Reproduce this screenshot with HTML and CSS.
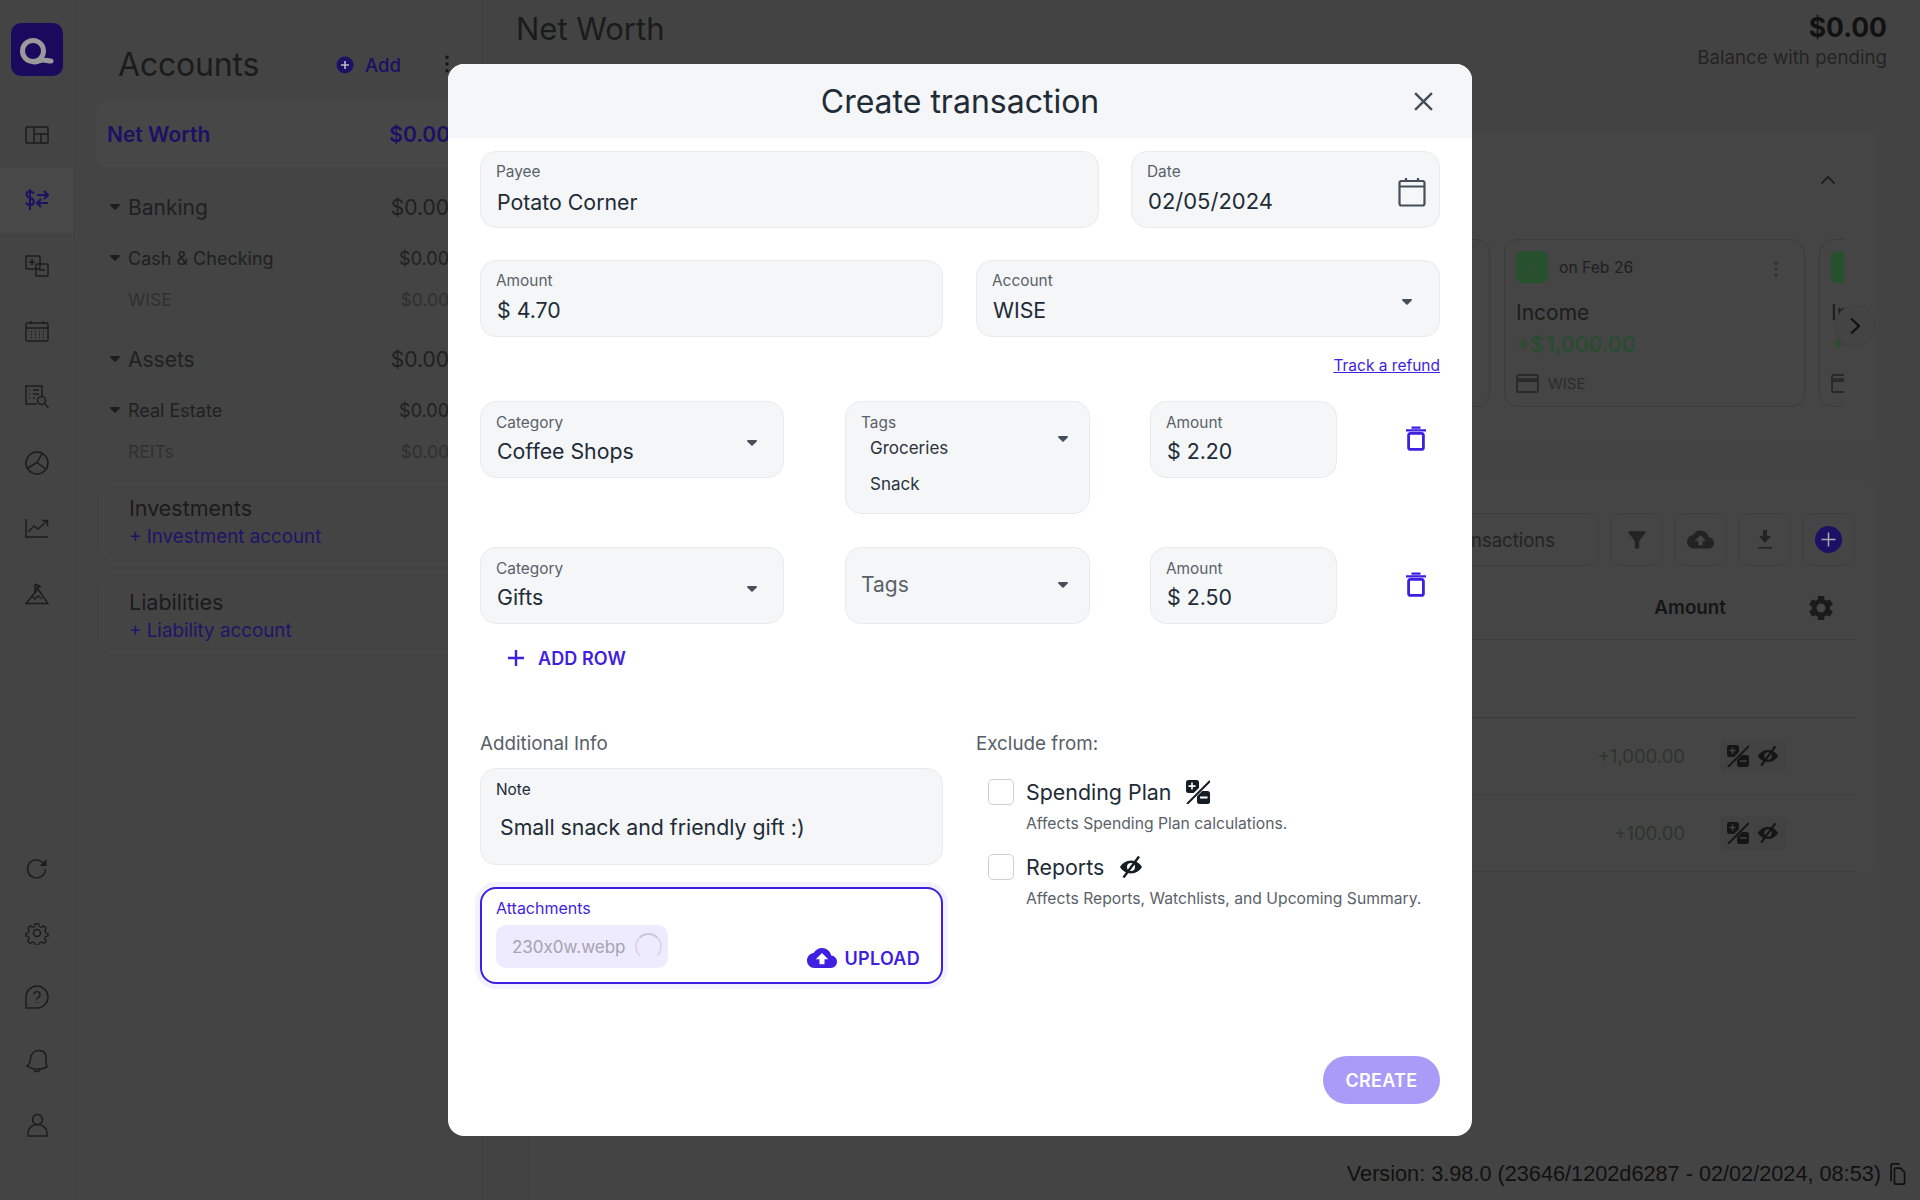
FILE: index.html
```html
<!DOCTYPE html>
<html lang="en">
<head>
<meta charset="utf-8">
<title>Create transaction</title>
<link rel="stylesheet" href="styles.css">
</head>
<body>
<svg class="defs" width="0" height="0" aria-hidden="true">
  <defs>
    <symbol id="i-caret" viewBox="0 0 10 6"><path d="M1 0h8c.8 0 1.2.9.7 1.5L5.6 5.6a.8.8 0 0 1-1.2 0L.3 1.5C-.2.9.2 0 1 0z"/></symbol>
    <symbol id="i-trash" viewBox="0 0 20 25"><path d="M0 3.200h20v2.300H0zM5.500.6h9v2.200h-9z"/><rect x="2.600" y="7.400" width="14.800" height="16" rx="2" fill="none" stroke="currentColor" stroke-width="2.800"/></symbol>
    <symbol id="i-pct" viewBox="0 0 24 24"><rect x="0" y="0" width="13" height="13" rx="2.500"/><rect x="11" y="11" width="13" height="13" rx="2.500"/><path d="M0 24 24 0" stroke="#fff" stroke-width="4.500" fill="none"/><path d="M1 24 24 1" stroke="currentColor" stroke-width="2" fill="none"/><path d="M2.500 5.300h2.700V2.600h1.600v2.700h2.700v1.600H6.800v2.700H5.200V6.900H2.500zM14 16.600h7.500v1.800H14z" fill="#fff"/></symbol>
    <symbol id="i-pct-dim" viewBox="0 0 24 24"><rect x="0" y="0" width="13" height="13" rx="2.500"/><rect x="11" y="11" width="13" height="13" rx="2.500"/><path d="M0 24 24 0" stroke="#424242" stroke-width="4.500" fill="none"/><path d="M1 24 24 1" stroke="currentColor" stroke-width="2" fill="none"/><path d="M2.500 5.300h2.700V2.600h1.600v2.700h2.700v1.600H6.800v2.700H5.200V6.900H2.500zM14 16.600h7.500v1.800H14z" fill="#424242"/></symbol>
    <symbol id="i-eye" viewBox="0 0 24 24"><path d="M12 5.500C7 5.500 3 8.500 1 12c2 3.500 6 6.500 11 6.500s9-3 11-6.500c-2-3.500-6-6.500-11-6.500zm0 10.500a4 4 0 1 1 0-8 4 4 0 0 1 0 8z"/><path d="M4.500 22.500 20 1.500" stroke="currentColor" stroke-width="2.400" fill="none"/></symbol>
    <symbol id="i-cloud" viewBox="0 0 24 24"><path d="M19.350 10.040C18.670 6.590 15.640 4 12 4 9.110 4 6.600 5.640 5.350 8.040 2.340 8.360 0 10.910 0 14c0 3.310 2.690 6 6 6h13c2.760 0 5-2.240 5-5 0-2.640-2.050-4.780-4.650-4.960zM14 13v4h-4v-4H7l5-5 5 5h-3z"/></symbol>
    <symbol id="i-card" viewBox="0 0 24 20"><path d="M2.500 1h19A1.500 1.500 0 0 1 23 2.500v15a1.500 1.500 0 0 1-1.500 1.500h-19A1.500 1.500 0 0 1 1 17.500v-15A1.500 1.500 0 0 1 2.500 1z" fill="none" stroke="currentColor" stroke-width="2"/><path d="M1 4.500h22v4H1z"/></symbol>
    <symbol id="i-kebab" viewBox="0 0 4 16"><circle cx="2" cy="2" r="1.500"/><circle cx="2" cy="8" r="1.500"/><circle cx="2" cy="14" r="1.500"/></symbol>
  </defs>
</svg>

<div class="app">
  <nav class="rail">
    <div class="logo">
      <svg width="52" height="53" viewBox="0 0 52 53" fill="none" stroke="#9a9a9a" stroke-width="5"><circle cx="22" cy="28" r="10.500"/><path d="M23 39c4 0 6-2 9-2s5 1 8 1" stroke-linecap="round"/></svg>
    </div>
    <ul class="rail-list">
      <li class="rail-item"><svg class="rail-icon" viewBox="0 0 24 24"><rect x="1" y="4" width="22" height="16" rx="1"/><path d="M9 4v16M9 11h14M16 11v9"/></svg></li>
      <li class="rail-item is-active"><svg class="rail-icon" viewBox="0 0 24 24"><path d="M9 5.500C8 4 6.500 3.500 5 3.500c-2 0-3.500 1.200-3.500 3s1.500 2.700 3.500 3.300 3.800 1.500 3.800 3.700-1.700 3.500-3.800 3.500c-1.700 0-3.300-.8-4-2.300M5 1v21M12 7h11M19 3l4 4-4 4M23 15H12M16 11l-4 4 4 4"/></svg></li>
      <li class="rail-item"><svg class="rail-icon" viewBox="0 0 24 24"><rect x="1" y="2" width="14" height="13" rx="1"/><rect x="11" y="10" width="12" height="12" rx="1"/><path d="M4 8h6M7 5v6M14 16h6"/></svg></li>
      <li class="rail-item"><svg class="rail-icon" viewBox="0 0 24 24"><rect x="1" y="3" width="22" height="18" rx="1"/><path d="M1 8h22M6 1v3M18 1v3M6 11.500h1M10 11.500h1M14 11.500h1M18 11.500h1M6 14.500h1M10 14.500h1M14 14.500h1M18 14.500h1M6 17.500h1M10 17.500h1M14 17.500h1M18 17.500h1"/></svg></li>
      <li class="rail-item"><svg class="rail-icon" viewBox="0 0 24 24"><path d="M12 19H1V1h16v10"/><path d="M4 5h1M8 5h6M4 9h1M8 9h6M4 13h1M8 13h2"/><circle cx="16.500" cy="15.500" r="4"/><path d="M19.500 18.500 23.500 23"/></svg></li>
      <li class="rail-item"><svg class="rail-icon" viewBox="0 0 24 24"><circle cx="12" cy="12" r="11"/><path d="M3 17 12 11.500l5-9M12 11.500l8 6"/></svg></li>
      <li class="rail-item"><svg class="rail-icon" viewBox="0 0 24 24"><path d="M1 3v18h22M3 16l6-6 4 3 9-8M17 4.500h5.500V10"/></svg></li>
      <li class="rail-item"><svg class="rail-icon" viewBox="0 0 24 24"><path d="M1 21.500h22L13 7 1 21.500zM10 2v8M10 2l5 2.500-5 2M7 14l3 3 3-3 4 3"/></svg></li>
    </ul>
    <ul class="rail-list rail-bottom">
      <li class="rail-item-lg"><svg class="rail-icon" viewBox="0 0 24 24"><path d="M20.500 12a9 9 0 1 1-2.700-6.500L21 8"/><path class="rail-fill" d="M21.500 2v7h-7z"/></svg></li>
      <li class="rail-item-lg"><svg class="rail-icon" viewBox="0 0 24 24"><circle cx="12" cy="12" r="3.500"/><path d="M10 1.500h4l.6 3 2.500 1.100 2.600-1.700 2.800 2.800-1.700 2.600 1.100 2.500 2.600.6v3l-2.600.6-1.100 2.500 1.700 2.600-2.800 2.800-2.600-1.700-2.500 1.100-.6 2.600h-4l-.6-2.600-2.500-1.100-2.600 1.700-2.800-2.800 1.700-2.600-1.100-2.500-2.600-.6v-3l2.600-.6 1.100-2.500L1.500 6.700l2.800-2.800 2.600 1.700 2.500-1.100z" transform="translate(1.400 1.400) scale(.88)"/></svg></li>
      <li class="rail-item-lg"><svg class="rail-icon" viewBox="0 0 24 24"><path d="M1 23V12a11 11 0 1 1 11 11H1z"/><path d="M9 9.500a3 3 0 1 1 4.500 2.600c-1 .6-1.500 1.200-1.500 2.400M12 17v1"/></svg></li>
      <li class="rail-item-lg"><svg class="rail-icon" viewBox="0 0 24 24"><path d="M2 17c3-1.500 3-4 3.500-7.500C6.200 4 10 1 15 1.500s6.500 4 6 8.500c-.3 3.500 0 6 1 8-6 3-14 3-20-1zM9 20.500c.5 2.500 4 3 6 .5"/></svg></li>
      <li class="rail-item-lg"><svg class="rail-icon" viewBox="0 0 24 24"><circle cx="12.500" cy="6.500" r="5"/><path d="M3 23v-3c0-5 4-8.500 9.500-8.500S22 15 22 20v3z"/></svg></li>
    </ul>
  </nav>

  <aside class="accounts">
    <header class="accounts-head">
      <h2 class="accounts-title">Accounts</h2>
      <span class="add-btn"><svg class="add-icon" viewBox="0 0 18 18"><circle cx="9" cy="9" r="8.500"/><path d="M5 9h8M9 5v8" stroke="#bbb" stroke-width="1.600"/></svg>Add</span>
      <svg class="head-kebab"><use href="#i-kebab"/></svg>
    </header>
    <div class="nw-row"><span>Net Worth</span><span>$0.00</span></div>
    <div class="acc-row acc-l1 first"><svg class="caret"><use href="#i-caret"/></svg><span class="acc-name">Banking</span><span>$0.00</span></div>
    <div class="acc-row acc-l2"><svg class="caret"><use href="#i-caret"/></svg><span class="acc-name">Cash &amp; Checking</span><span>$0.00</span></div>
    <div class="acc-row acc-l3"><span class="acc-name">WISE</span><span>$0.00</span></div>
    <div class="acc-row acc-l1"><svg class="caret"><use href="#i-caret"/></svg><span class="acc-name">Assets</span><span>$0.00</span></div>
    <div class="acc-row acc-l2"><svg class="caret"><use href="#i-caret"/></svg><span class="acc-name">Real Estate</span><span>$0.00</span></div>
    <div class="acc-row acc-l3"><span class="acc-name">REITs</span><span>$0.00</span></div>
    <div class="acc-card"><div class="acc-card-title">Investments</div><div class="acc-card-link">+ Investment account</div></div>
    <div class="acc-card"><div class="acc-card-title">Liabilities</div><div class="acc-card-link">+ Liability account</div></div>
  </aside>

  <main class="main">
    <header class="main-head">
      <h1 class="main-title">Net Worth</h1>
      <div class="balance"><div class="balance-value">$0.00</div><div class="balance-label">Balance with pending</div></div>
    </header>
    <div class="main-body">
      <section class="panel upcoming">
        <div class="chevron-row"><svg class="chevron" viewBox="0 0 18 10"><path d="M1.500 9 9 1.500 16.500 9"/></svg></div>
        <div class="carousel">
          <article class="up-card"></article>
          <article class="up-card">
            <div class="up-top"><span class="up-badge">I</span><span class="up-date">on Feb 26</span><svg class="up-kebab"><use href="#i-kebab"/></svg></div>
            <div class="up-name">Income</div>
            <div class="up-amount">+$ 1,000.00</div>
            <div class="up-acc"><svg class="up-card-icon"><use href="#i-card"/></svg>WISE</div>
          </article>
          <article class="up-card">
            <div class="up-top"><span class="up-badge"></span></div>
            <div class="up-name">Income</div>
            <div class="up-amount">+$ 100.00</div>
            <div class="up-acc"><svg class="up-card-icon"><use href="#i-card"/></svg></div>
          </article>
        </div>
        <span class="next-btn"><svg viewBox="0 0 12 18" width="12" height="18"><path d="M2 1.500 10 9l-8 7.500"/></svg></span>
      </section>

      <section class="panel txns">
        <div class="toolbar">
          <div class="search">Search transactions</div>
          <span class="tool"><svg viewBox="0 0 24 24" width="26" height="26"><path d="M4.250 5.610C6.270 8.200 10 13 10 13v6c0 .55.45 1 1 1h2c.55 0 1-.45 1-1v-6s3.720-4.800 5.740-7.390A.998.998 0 0 0 18.950 4H5.040c-.83 0-1.300.95-.79 1.610z"/></svg></span>
          <span class="tool"><svg width="27" height="27"><use href="#i-cloud"/></svg></span>
          <span class="tool"><svg viewBox="0 0 24 24" width="24" height="24"><path d="M18 8h-4V2h-4v6H6l6 7 6-7zM5 19v1.500h14V19H5z"/></svg></span>
          <span class="tool"><svg viewBox="0 0 27 27" width="27" height="27"><circle class="tool-plus" cx="13.500" cy="13.500" r="13.500"/><path d="M6.500 13.500h14M13.500 6.500v14" stroke="#aaa" stroke-width="1.500"/></svg></span>
        </div>
        <div class="t-head">
          <span class="t-head-amount">Amount</span>
          <svg class="t-gear" viewBox="0 0 24 24"><path d="M19.140 12.940c.04-.3.06-.61.06-.94 0-.32-.02-.64-.07-.94l2.030-1.580c.18-.14.23-.41.12-.61l-1.920-3.320c-.12-.22-.37-.29-.59-.22l-2.390.96c-.5-.38-1.030-.7-1.620-.94l-.36-2.540c-.04-.24-.24-.41-.48-.41h-3.840c-.24 0-.43.17-.47.41l-.36 2.540c-.59.24-1.130.57-1.620.94l-2.390-.96c-.22-.08-.47 0-.59.22L2.740 8.870c-.12.21-.08.47.12.61l2.030 1.580c-.05.3-.09.63-.09.94s.02.64.07.94l-2.030 1.580c-.18.14-.23.41-.12.61l1.920 3.320c.12.22.37.29.59.22l2.390-.96c.5.38 1.030.7 1.620.94l.36 2.540c.05.24.24.41.48.41h3.840c.24 0 .44-.17.47-.41l.36-2.540c.59-.24 1.130-.56 1.620-.94l2.390.96c.22.08.47 0 .59-.22l1.920-3.320c.12-.22.07-.47-.12-.61l-2.010-1.580zM12 15.600c-1.980 0-3.600-1.620-3.600-3.600s1.620-3.600 3.600-3.600 3.600 1.620 3.600 3.600-1.620 3.600-3.600 3.600z"/></svg>
        </div>
        <div class="t-group"></div>
        <div class="t-row"><span class="t-amount">+1,000.00</span><span class="t-flags"><svg><use href="#i-pct-dim"/></svg><svg><use href="#i-eye"/></svg></span></div>
        <div class="t-row"><span class="t-amount">+100.00</span><span class="t-flags"><svg><use href="#i-pct-dim"/></svg><svg><use href="#i-eye"/></svg></span></div>
      </section>
    </div>
  </main>
</div>

<div class="version">Version: 3.98.0 (23646/1202d6287 - 02/02/2024, 08:53)<svg class="copy" viewBox="0 0 20 26"><path d="M3 22V3a2 2 0 0 1 2-2h8" fill="none" stroke="currentColor" stroke-width="2"/><path d="M7 7a1 1 0 0 1 1-1h6l5 5v12a2 2 0 0 1-2 2H9a2 2 0 0 1-2-2z" fill="none" stroke="currentColor" stroke-width="2"/></svg></div>

<section class="modal" role="dialog" aria-label="Create transaction">
  <header class="modal-head">
    <h2 class="modal-title">Create transaction</h2>
    <svg class="modal-close" viewBox="0 0 20 20"><path d="M2 2l16 16M18 2 2 18"/></svg>
  </header>
  <div class="modal-body">
    <div class="row row-top">
      <div class="field"><div class="f-label">Payee</div><div class="f-value">Potato Corner</div></div>
      <div class="field field-date">
        <div class="f-label">Date</div><div class="f-value date-value">02/05/2024</div>
        <svg class="f-cal" viewBox="0 0 28 30"><rect x="1.500" y="4" width="25" height="24.500" rx="2"/><path d="M1.500 9.500h25M8 1v3M20 1v3"/></svg>
      </div>
    </div>
    <div class="row-pair row-second">
      <div class="field"><div class="f-label">Amount</div><div class="f-value">$ 4.70</div></div>
      <div class="field has-caret"><div class="f-label">Account</div><div class="f-value">WISE</div><svg class="f-caret caret-account"><use href="#i-caret"/></svg></div>
    </div>
    <div class="refund"><a class="refund-link">Track a refund</a></div>

    <div class="split">
      <div class="field has-caret"><div class="f-label">Category</div><div class="f-value">Coffee Shops</div><svg class="f-caret"><use href="#i-caret"/></svg></div>
      <div class="field field-tags has-caret"><div class="f-label">Tags</div><div class="tag">Groceries</div><div class="tag">Snack</div><svg class="f-caret caret-tags"><use href="#i-caret"/></svg></div>
      <div class="field"><div class="f-label">Amount</div><div class="f-value">$ 2.20</div></div>
      <svg class="trash"><use href="#i-trash"/></svg>
    </div>
    <div class="split split-second">
      <div class="field has-caret"><div class="f-label">Category</div><div class="f-value">Gifts</div><svg class="f-caret"><use href="#i-caret"/></svg></div>
      <div class="field field-empty has-caret"><div class="f-placeholder">Tags</div><svg class="f-caret caret-tags"><use href="#i-caret"/></svg></div>
      <div class="field"><div class="f-label">Amount</div><div class="f-value">$ 2.50</div></div>
      <svg class="trash"><use href="#i-trash"/></svg>
    </div>
    <div class="add-row"><svg class="add-row-icon" viewBox="0 0 18 18"><path d="M9 1v16M1 9h16"/></svg>ADD ROW</div>

    <div class="row-pair details">
      <div class="col">
        <div class="section-label">Additional Info</div>
        <div class="field field-note"><div class="f-label note-label">Note</div><div class="f-value note-value">Small snack and friendly gift :)</div></div>
        <div class="field field-attach">
          <div class="f-label attach-label">Attachments</div>
          <div class="attach-line">
            <span class="chip">230x0w.webp<span class="spinner"></span></span>
            <span class="upload"><svg class="upload-icon"><use href="#i-cloud"/></svg>UPLOAD</span>
          </div>
        </div>
      </div>
      <div class="col">
        <div class="section-label">Exclude from:</div>
        <div class="check first-check">
          <span class="box"></span>
          <div><div class="check-title">Spending Plan<svg class="check-icon"><use href="#i-pct"/></svg></div><div class="check-sub">Affects Spending Plan calculations.</div></div>
        </div>
        <div class="check">
          <span class="box"></span>
          <div><div class="check-title">Reports<svg class="check-icon"><use href="#i-eye"/></svg></div><div class="check-sub">Affects Reports, Watchlists, and Upcoming Summary.</div></div>
        </div>
      </div>
    </div>
    <div class="actions"><span class="create">CREATE</span></div>
  </div>
</section>
</body>
</html>
```
FILE: styles.css
```css
* { box-sizing: border-box; }
html, body { margin: 0; height: 100%; }
body {
  width: 1920px; height: 1200px; overflow: hidden; position: relative;
  background: #434343; color: #161616;
  font-family: Inter, "Noto Sans", sans-serif;
}
h1, h2, ul { margin: 0; padding: 0; font-weight: 400; list-style: none; }
.defs { position: absolute; }

.app { display: flex; height: 1200px; }

/* rail */
.rail { width: 75px; flex: none; border-right: 1px solid #3f3f3f; display: flex; flex-direction: column; background: #444; }
.logo { width: 52px; height: 53px; margin: 23px 0 26px 11px; background: #1a0a5e; border-radius: 10px; }
.logo svg { display: block; }
.rail-list { display: flex; flex-direction: column; }
.rail-item { height: 65.6px; display: flex; align-items: center; justify-content: center; }
.rail-item.is-active { background: #484848; color: #1c1065; }
.rail-item-lg { height: 64px; display: flex; align-items: center; justify-content: center; }
.rail-bottom { margin-top: auto; margin-bottom: 43px; }
.rail-icon { width: 24px; height: 24px; fill: none; stroke: #1c1c1c; stroke-width: 1.500; }
.is-active .rail-icon { stroke: #1c1065; stroke-width: 2; }
.rail-fill { fill: #1c1c1c; stroke: none; }

/* accounts */
.accounts { width: 408px; flex: none; border-right: 1px solid #3f3f3f; padding: 0 33px 0 22px; background: #444; overflow: hidden; }
.accounts-head { height: 101px; display: flex; align-items: center; padding: 27px 0 0 21px; margin-right: -22px; }
.accounts-title { font-size: 32px; letter-spacing: -.2px; color: #1b1b1b; width: 218px; }
.add-btn { display: flex; align-items: center; margin-top: 2px; font-size: 18.500px; font-weight: 500; color: #1c1065; }
.add-icon { width: 18px; height: 18px; fill: #1c1065; margin-right: 11px; }
.head-kebab { width: 6px; height: 18px; fill: #151515; margin-left: 43px; }
.nw-row { height: 66px; margin-right: -33px; padding: 0 32px 0 10px; display: flex; align-items: center; justify-content: space-between; background: #474747; border-radius: 8px; color: #1c1065; font-size: 21px; font-weight: 600; }
.acc-row { display: flex; align-items: center; justify-content: space-between; color: #202020; padding-left: 13px; }
.acc-name { flex: 1; }
.acc-l1 { font-size: 21px; height: 46px; margin-top: 21px; }
.acc-l1.first { margin-top: 17px; }
.acc-l2 { font-size: 18px; height: 34px; margin-top: 11px; }
.acc-l3 { font-size: 17.500px; height: 32px; margin-top: 8px; color: #303030; padding-left: 31px; }
.caret { width: 10px; height: 6px; fill: #1c1c1c; margin-right: 8px; }
.acc-card { height: 81px; margin-top: 13px; margin-right: -33px; border: 1px solid #404040; border-radius: 16px; padding: 14px 0 0 31px; }
.acc-l3 + .acc-card { margin-top: 14px; }
.acc-card-title { font-size: 21.500px; line-height: 24px; color: #1b1b1b; }
.acc-card-link { font-size: 18.800px; line-height: 22px; margin-top: 6px; color: #1e1468; }

/* main */
.main { flex: 1; min-width: 0; }
.main-head { height: 84px; display: flex; justify-content: space-between; padding: 11px 33px 0 33px; align-items: flex-start; }
.main-title { font-size: 31px; line-height: 36px; color: #1b1b1b; }
.balance { text-align: right; }
.balance-value { font-size: 26.500px; line-height: 33px; font-weight: 700; color: #111; }
.balance-label { font-size: 18.700px; line-height: 27px; color: #232323; }
.main-body { margin: 48px 0 0 45px; width: 1347px; height: 1068px; background: #444; border-left: 1px solid #3f3f3f; }
.panel { background: #454545; border-radius: 12px; }
.upcoming { height: 313px; position: relative; padding-top: 32px; }
.chevron-row { display: flex; justify-content: flex-end; padding-right: 39px; height: 75px; }
.chevron { width: 16px; height: 10px; fill: none; stroke: #1b1b1b; stroke-width: 2; margin-top: 11px; }
.carousel { display: flex; gap: 14px; margin-left: 660px; width: 655px; overflow: hidden; }
.up-card { width: 301px; height: 168px; flex: none; border: 1px solid #3b3b3b; border-radius: 14px; padding: 11px 11px 0; }
.up-top { display: flex; align-items: center; height: 32px; }
.up-badge { width: 32px; height: 32px; border-radius: 6px; background: #27502e; color: #444; font-size: 14px; display: flex; align-items: center; justify-content: center; }
.up-date { font-size: 15.700px; color: #1e1e1e; margin-left: 11px; flex: 1; }
.up-kebab { width: 4px; height: 16px; fill: #2e2e2e; margin: 4px 15px 0 0; }
.up-name { font-size: 21px; line-height: 28px; margin-top: 16px; color: #1c1c1c; }
.up-amount { font-size: 21.500px; line-height: 28px; font-weight: 500; color: #264d2e; margin-top: 3px; word-spacing: -4px; }
.up-acc { display: flex; align-items: center; font-size: 15px; color: #2c2c2c; margin-top: 16px; height: 19px; }
.up-card-icon { width: 23px; height: 19px; fill: #2a2a2a; color: #2a2a2a; margin-right: 9px; }
.next-btn { position: absolute; right: 0; top: 173px; width: 40px; height: 42px; border-radius: 50%; background: #444; border: 1px solid #404040; display: flex; align-items: center; justify-content: center; }
.next-btn path { fill: none; stroke: #111; stroke-width: 2.200; }
.txns { margin-top: 35px; height: 393px; padding: 33px 20px 0 0; }
.toolbar { display: flex; justify-content: flex-end; gap: 11px; }
.search { width: 300px; height: 53px; border: 1px solid #3d3d3d; border-radius: 12px; padding-right: 43px; display: flex; align-items: center; justify-content: flex-end; font-size: 18.500px; color: #232323; white-space: nowrap; }
.tool { width: 53px; height: 53px; border: 1px solid #3d3d3d; border-radius: 12px; display: flex; align-items: center; justify-content: center; fill: #232323; }
.tool-plus { fill: #1c1065; }
.t-head { height: 74px; padding-top: 10px; display: flex; justify-content: flex-end; align-items: center; border-bottom: 1px solid #3b3b3b; }
.t-head-amount { font-size: 18.800px; font-weight: 600; color: #151515; margin-right: 80px; }
.t-gear { width: 30px; height: 30px; fill: #1a1a1a; margin-right: 19px; }
.t-group { height: 78px; background: #464646; border-bottom: 1px solid #383838; }
.t-row { height: 77px; display: flex; justify-content: flex-end; align-items: center; border-bottom: 1px solid #3e3e3e; padding-right: 69px; }
.t-amount { font-size: 18.500px; color: #2b352e; margin-right: 35px; }
.t-flags { display: flex; gap: 8px; width: 66px; height: 34px; align-items: center; padding-left: 7px; background: #424242; border-radius: 6px; }
.t-flags svg { width: 22px; height: 22px; fill: #151515; color: #151515; }

.version { position: absolute; right: 14px; top: 1160px; display: flex; align-items: center; font-family: "Liberation Sans", Arial, sans-serif; font-size: 21.700px; line-height: 28px; color: #111; }
.copy { width: 18px; height: 22px; margin-left: 7px; color: #111; }

/* modal */
.modal { position: absolute; left: 448px; top: 64px; width: 1024px; height: 1072px; background: #fff; border-radius: 16px; overflow: hidden; color: #212b36; }
.modal-head { height: 74px; background: #f4f6f8; display: flex; align-items: center; justify-content: center; position: relative; }
.modal-title { font-size: 32px; color: #212b36; }
.modal-close { position: absolute; left: 965px; top: 27px; width: 21px; height: 21px; fill: none; stroke: #454f5b; stroke-width: 2.300; }
.modal-body { padding: 13px 32px 0; }
.row { display: flex; }
.row-top { gap: 32px; }
.row-top .field { flex: 1; }
.row-top .field-date { flex: none; width: 309px; }
.row-second { margin-top: 32px; }
.row-pair { display: grid; grid-template-columns: 463px 464px; gap: 33px; }
.field { height: 77px; background: #f4f6f8; border: 1px solid #e8ebee; border-radius: 16px; padding: 9px 15px 0; position: relative; }
.f-label { font-size: 15.400px; line-height: 22px; color: #5a6169; }
.f-value { font-size: 21.300px; line-height: 26px; margin: 5px 0 0 1px; color: #212b36; white-space: nowrap; }
.row-top .f-value { margin-top: 6px; }
.row-top .date-value { margin-top: 5px; font-size: 22px; }
.f-cal { position: absolute; right: 13px; top: 25px; width: 28px; height: 30px; fill: none; stroke: #454f5b; stroke-width: 2.200; }
.f-caret { position: absolute; right: 26px; top: 38px; width: 10px; height: 6px; fill: #454f5b; }
.caret-account { right: 27px; }
.caret-tags { right: 21px; top: 34px; }
.refund { height: 64px; padding-top: 19px; text-align: right; font-size: 15.500px; line-height: 20px; }
.refund-link { color: #3f1fe0; text-decoration: underline; }
.split { display: grid; grid-template-columns: 304px 245px 186px 24px; column-gap: 61px; align-items: start; }
.split > .field { padding-top: 10px; }
.split .f-value { margin-top: 4px; }
.split > .field:nth-child(3) { margin-left: -1px; }
.split > .field-tags { height: 113px; padding-top: 11px; }
.tag { font-size: 17px; line-height: 36px; margin-left: 9px; color: #2a333d; }
.field-tags .f-label { line-height: 20px; margin-bottom: -3px; }
.split-second { margin-top: 33px; }
.split > .field-empty { padding-top: 23px; }
.f-placeholder { font-size: 21px; line-height: 28px; color: #5a6169; }
.trash { width: 20px; height: 25px; margin: 25px 0 0 8px; fill: #3f1fe0; color: #3f1fe0; }
.add-row { display: flex; align-items: center; height: 30px; margin: 19px 0 0 27px; font-size: 18px; font-weight: 600; letter-spacing: .1px; color: #3f1fe0; }
.add-row-icon { width: 18px; height: 18px; fill: none; stroke: #3f1fe0; stroke-width: 2.400; margin-right: 13px; }
.details { margin-top: 59px; }
.section-label { font-size: 18.800px; line-height: 24px; color: #565f68; }
.field-note { height: 97px; margin-top: 12px; padding-top: 10px; }
.note-label { color: #212b36; }
.note-value { margin: 13px 0 0 4px; }
.field-attach { height: 97px; margin-top: 22px; padding: 8px 14px 0; background: #fff; border: 2px solid #3f1fe0; box-shadow: 0 0 0 5px #f4f2fe; }
.attach-label { color: #3f1fe0; font-size: 16px; }
.attach-line { display: flex; align-items: flex-start; justify-content: space-between; margin-top: 6px; padding-right: 7px; }
.chip { width: 172px; height: 43px; padding-left: 16px; background: #eeebff; border-radius: 10px; display: flex; align-items: center; font-size: 17px; font-feature-settings: "calt" 0; color: #a5a3ad; white-space: nowrap; position: relative; }
.spinner { position: absolute; right: 6px; top: 8px; width: 27px; height: 27px; border-radius: 50%; border: 2px solid #c9c6d6; border-bottom-color: transparent; border-left-color: #d9d6e6; border-right-color: #d9d6e6; }
.upload { display: flex; align-items: center; margin-top: 18px; font-size: 18px; font-weight: 600; letter-spacing: .3px; color: #3f1fe0; }
.upload-icon { width: 32px; height: 30px; margin-right: 6px; fill: #3f1fe0; }
.check { display: flex; gap: 12px; margin-left: 12px; margin-top: 19px; }
.check.first-check { margin-top: 22px; }
.box { width: 26px; height: 26px; margin-top: 1px; flex: none; border: 1.500px solid #ccd1d6; border-radius: 5px; background: #fff; }
.check-title { display: flex; align-items: center; font-size: 21.400px; line-height: 28px; color: #212b36; }
.check-icon { width: 24px; height: 24px; margin-left: 15px; fill: #161c24; color: #161c24; }
.check-sub { font-size: 15.700px; line-height: 20px; color: #5a6169; margin-top: 8px; white-space: nowrap; }
.actions { display: flex; justify-content: flex-end; position: absolute; right: 32px; top: 992px; }
.create { width: 117px; height: 48px; border-radius: 24px; background: #a99bf7; color: #fff; font-size: 18px; font-weight: 600; letter-spacing: .3px; display: flex; align-items: center; justify-content: center; }
```
